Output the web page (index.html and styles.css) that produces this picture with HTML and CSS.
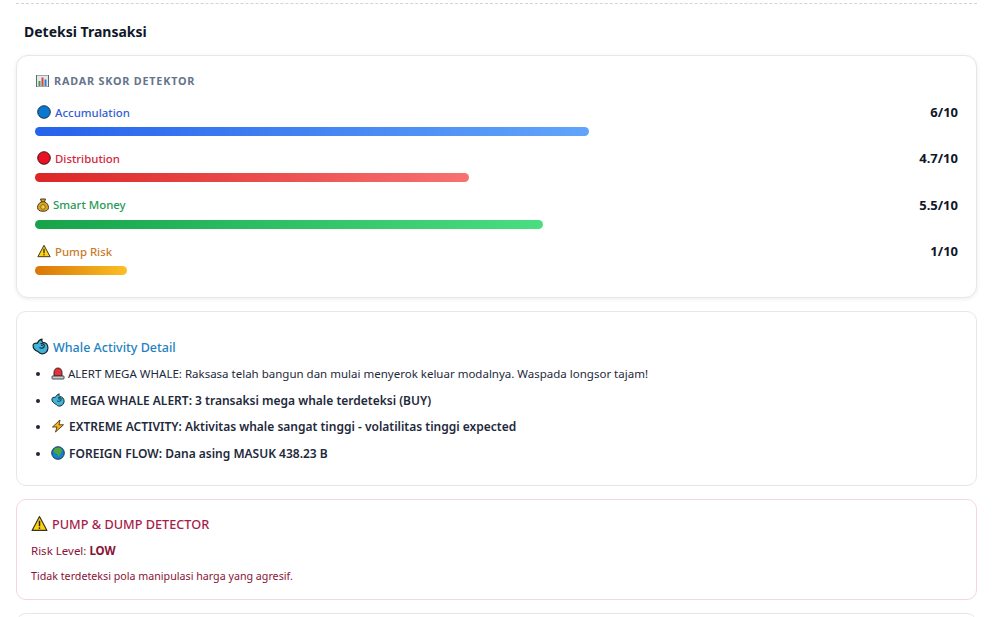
FILE: index.html
```html
<!DOCTYPE html>
<html lang="id">
<head>
  <meta charset="UTF-8" />
  <meta name="viewport" content="width=device-width, initial-scale=1.0" />
  <title>Deteksi Transaksi</title>
  <link rel="stylesheet" href="styles.css">
</head>
<body>
  <svg class="defs" width="0" height="0" aria-hidden="true">
    <symbol id="ic-whale" viewBox="0 0 16 16">
      <path d="M1 7C1 5.300 3 4.500 5 5 5.500 3.500 7 1.500 9.500 1 9 2.200 9.200 3.200 10 4c3 .3 5 2.500 5 5.300C15 12.500 12.500 15 9.500 15 7.500 15 6.500 13.800 5.500 12.700 3.500 12 1 10 1 7Z" fill="#3fb3d8" stroke="#16222c" stroke-width="1.100" stroke-linejoin="round"/>
      <path d="M8 5.500c2.200-1 4 .5 3.500 2.500-.5 1.800-3 2-4.500 1" fill="none" stroke="#16222c" stroke-width="1"/>
      <circle cx="9.300" cy="6.800" r=".8" fill="#16222c"/>
    </symbol>
    <symbol id="ic-warn" viewBox="0 0 16 16">
      <path d="M8 1.500 15 14.500H1Z" fill="#fcd116" stroke="#3a3418" stroke-width="1.100" stroke-linejoin="round"/>
      <path d="M8 5.500V10.500" stroke="#26220f" stroke-width="1.400"/>
      <circle cx="8" cy="12.300" r=".8" fill="#26220f"/>
    </symbol>
  </svg>

  <div class="divider"></div>
  <h3 class="page-title">Deteksi Transaksi</h3>

  <div class="card radar">
    <div class="radar-title">
      <svg class="ico-chart" viewBox="0 0 12 12">
        <rect width="12" height="12" fill="#e4e8ea"/>
        <path d="M0 0H12V12H0Z" fill="none" stroke="#5c6b73" stroke-width="1"/>
        <rect x="2" y="6" width="2" height="5" fill="#3f9e4d"/>
        <rect x="5" y="2.500" width="2" height="8.500" fill="#d8453a"/>
        <rect x="8" y="4.500" width="2" height="6.500" fill="#2f7fc4"/>
      </svg>
      RADAR SKOR DETEKTOR
    </div>

    <div class="score">
      <div class="score-head">
        <span class="score-name blue">
          <svg class="ico" viewBox="0 0 14 14"><circle cx="7" cy="7" r="6.300" fill="#0b78d0" stroke="#10253a" stroke-width=".9"/></svg>
          Accumulation
        </span>
        <b class="score-val">6/10</b>
      </div>
      <div class="bar"><div class="fill fill-blue" style="width:60%"></div></div>
    </div>

    <div class="score">
      <div class="score-head">
        <span class="score-name red">
          <svg class="ico" viewBox="0 0 14 14"><circle cx="7" cy="7" r="6.300" fill="#e81224" stroke="#2e0d12" stroke-width=".9"/></svg>
          Distribution
        </span>
        <b class="score-val">4.7/10</b>
      </div>
      <div class="bar"><div class="fill fill-red" style="width:47%"></div></div>
    </div>

    <div class="score">
      <div class="score-head">
        <span class="score-name green">
          <svg class="ico ico-bag" viewBox="0 0 12 14">
            <path d="M3.500 1h5L7.500 3.800c2.500 1 4 3.300 4 5.700 0 2.500-2 3.800-5.500 3.800S.5 12 .5 9.500c0-2.400 1.500-4.700 4-5.700Z" fill="#d9a520" stroke="#3b2c10" stroke-width=".9" stroke-linejoin="round"/>
            <path d="M4.300 3.800h3.400" stroke="#3b2c10" stroke-width=".9"/>
            <circle cx="6" cy="9" r="2.300" fill="#f1cf4d" stroke="#6a4f12" stroke-width=".7"/>
          </svg>
          Smart Money
        </span>
        <b class="score-val">5.5/10</b>
      </div>
      <div class="bar"><div class="fill fill-green" style="width:55%"></div></div>
    </div>

    <div class="score">
      <div class="score-head">
        <span class="score-name orange">
          <svg class="ico"><use href="#ic-warn"/></svg>
          Pump Risk
        </span>
        <b class="score-val">1/10</b>
      </div>
      <div class="bar"><div class="fill fill-orange" style="width:10%"></div></div>
    </div>
  </div>

  <div class="card whale">
    <h4 class="whale-title"><svg class="ico ico-big"><use href="#ic-whale"/></svg>Whale Activity Detail</h4>
    <ul class="whale-list">
      <li>
        <svg class="ico" viewBox="0 0 14 14">
          <path d="M3 10V6.500C3 3.800 4.600 2 7 2s4 1.800 4 4.500V10Z" fill="#e0343c" stroke="#3a1216" stroke-width=".9"/>
          <rect x="1" y="10" width="12" height="3" rx=".6" fill="#c9ccd0" stroke="#33373b" stroke-width=".9"/>
        </svg>
        ALERT MEGA WHALE: Raksasa telah bangun dan mulai menyerok keluar modalnya. Waspada longsor tajam!
      </li>
      <li class="strong"><svg class="ico ico-gap"><use href="#ic-whale"/></svg> MEGA WHALE ALERT: 3 transaksi mega whale terdeteksi (BUY)</li>
      <li class="strong">
        <svg class="ico" viewBox="0 0 14 14"><path d="M9 1 1.500 8H6L4.500 13 12.500 5.800H8Z" fill="#f7b21b" stroke="#4a3510" stroke-width=".9" stroke-linejoin="round"/></svg>
        EXTREME ACTIVITY: Aktivitas whale sangat tinggi - volatilitas tinggi expected
      </li>
      <li class="strong">
        <svg class="ico" viewBox="0 0 14 14">
          <circle cx="7" cy="7" r="6.300" fill="#1383c9" stroke="#12283a" stroke-width=".9"/>
          <path d="M4 2.300c2-1 5-.8 6.500.7.800 1.500.3 3.300-1 4.500-1 .9-.8 2.500-2 2.800C6.500 9.500 6.800 8 5.300 7.500 3.800 7 2.500 6 2.800 4.300Z" fill="#4fa63a"/>
        </svg>
        FOREIGN FLOW: Dana asing MASUK 438.23 B
      </li>
    </ul>
  </div>

  <div class="card pump">
    <h4 class="pump-title"><svg class="ico ico-big"><use href="#ic-warn"/></svg>PUMP &amp; DUMP DETECTOR</h4>
    <p class="pump-line">Risk Level: <b>LOW</b></p>
    <p class="pump-note">Tidak terdeteksi pola manipulasi harga yang agresif.</p>
  </div>

  <div class="card next"></div>
</body>
</html>
```

FILE: styles.css
```css
html, body {
  height: 617px;
  overflow: hidden;
}
body {
  margin: 0;
  padding: 3px 20px 0 16px;
  background: #fff;
  color: #0f172a;
  font-family: "Noto Sans", sans-serif;
}
.defs {
  position: absolute;
}
.divider {
  border-top: 1px dashed #d1d5db;
}
.page-title {
  margin: 19px 0 14px 8px;
  font-size: 14px;
  line-height: 18px;
  font-weight: 700;
}
.card {
  background: #fff;
  border: 1px solid #e5e7eb;
  border-radius: 10px;
  margin-bottom: 13px;
  overflow: hidden;
}
.ico {
  width: 14px;
  height: 14px;
  flex: none;
  vertical-align: -2px;
}
.ico-big {
  width: 17px;
  height: 17px;
  vertical-align: -3px;
  margin-right: 4px;
}

/* radar */
.radar {
  height: 223px;
  padding: 18px 18px 0;
  border-radius: 12px;
  box-shadow: 0 1px 4px rgba(15, 23, 42, 0.08);
}
.radar-title {
  display: flex;
  align-items: center;
  gap: 5px;
  font-size: 10.800px;
  line-height: 14px;
  font-weight: 700;
  letter-spacing: 0.8px;
  color: #64748b;
  margin-bottom: 14px;
  padding-left: 1px;
}
.ico-chart {
  width: 13px;
  height: 12px;
}
.score {
  height: 46.400px;
}
.score-head {
  display: flex;
  justify-content: space-between;
  align-items: center;
  height: 20px;
  margin-bottom: 5px;
}
.score-name {
  display: flex;
  align-items: center;
  gap: 4.500px;
  padding-left: 1.500px;
  font-size: 11.400px;
  font-weight: 500;
}
.ico-bag {
  width: 12px;
}
.score-val {
  font-size: 13px;
  color: #0f172a;
}
.blue { color: #3560d4; }
.red { color: #d3263a; }
.green { color: #279a55; }
.orange { color: #c97b2a; }
.bar {
  height: 9px;
}
.fill {
  height: 100%;
  border-radius: 5px;
}
.fill-blue { background: linear-gradient(90deg, #2563eb, #60a5fa); }
.fill-red { background: linear-gradient(90deg, #dc2626, #f87171); }
.fill-green { background: linear-gradient(90deg, #16a34a, #4ade80); }
.fill-orange { background: linear-gradient(90deg, #d97706, #fbbf24); }

/* whale */
.whale {
  height: 173px;
  padding: 0 15px;
}
.whale-title {
  margin: 26px 0 8px;
  font-size: 12.500px;
  line-height: 18px;
  font-weight: 500;
  color: #1f82c0;
}
.whale-list {
  margin: 0;
  padding-left: 19px;
  font-size: 11.500px;
  line-height: 18px;
  color: #1e293b;
}
.whale-list li {
  margin-bottom: 8.600px;
}
.strong {
  font-size: 12px;
  font-weight: 600;
}
.strong .ico {
  margin-right: 1px;
}
.strong .ico-gap {
  margin-right: 2px;
}

/* pump */
.pump {
  height: 99px;
  padding: 0 14px;
  border-color: #f6d5df;
}
.pump-title {
  margin: 15px 0 10px;
  font-size: 12.700px;
  line-height: 18px;
  font-weight: 500;
  color: #a81c4c;
}
.pump-line, .pump-note {
  margin: 0;
  font-size: 11.500px;
  line-height: 16px;
  color: #881337;
}
.pump-note {
  margin-top: 9px;
  font-size: 10.700px;
}
.next {
  height: 40px;
  margin-bottom: 0;
}
```
